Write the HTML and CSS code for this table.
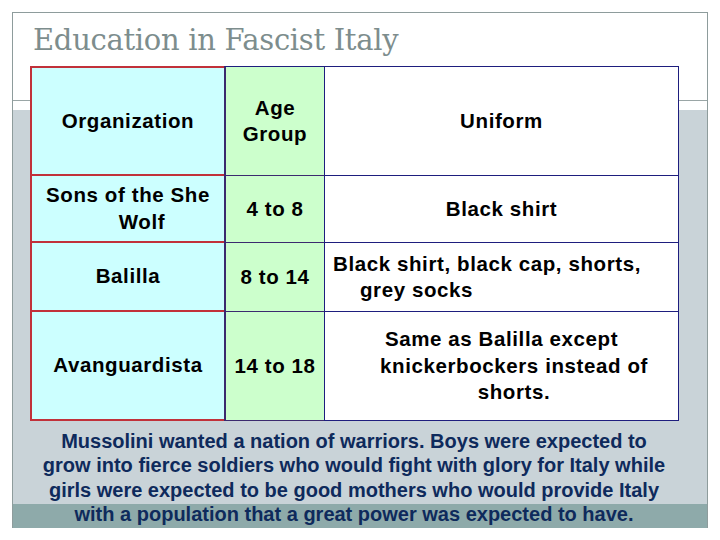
FILE: index.html
```html
<!DOCTYPE html>
<html>
<head>
<meta charset="utf-8">
<link rel="stylesheet" href="styles.css">
</head>
<body>
<div class="slide">
  <div class="bg">
    <div class="bg-head"></div>
    <div class="bg-rule"></div>
    <div class="bg-gap"></div>
    <div class="bg-body"></div>
    <div class="bg-foot"></div>
  </div>
  <div class="content">
    <h1 class="title">Education in Fascist Italy</h1>
    <div class="grid">
      <div class="c org first"><span>Organization</span></div>
      <div class="c age first"><span>Age</span><span>Group</span></div>
      <div class="c uni first"><span>Uniform</span></div>

      <div class="c org"><span>Sons of the She</span><span class="wolf">Wolf</span></div>
      <div class="c age"><span>4 to 8</span></div>
      <div class="c uni"><span>Black shirt</span></div>

      <div class="c org"><span>Balilla</span></div>
      <div class="c age"><span>8 to 14</span></div>
      <div class="c uni left"><span>Black shirt, black cap, shorts,</span><span class="ind">grey socks</span></div>

      <div class="c org"><span>Avanguardista</span></div>
      <div class="c age"><span>14 to 18</span></div>
      <div class="c uni"><span>Same as Balilla except</span><span class="shift">knickerbockers instead of</span><span class="shift">shorts.</span></div>
    </div>
    <p class="note">Mussolini wanted a nation of warriors. Boys were expected to<br>grow into fierce soldiers who would fight with glory for Italy while<br>girls were expected to be good mothers who would provide Italy<br>with a population that a great power was expected to have.</p>
  </div>
</div>
</body>
</html>
```
FILE: styles.css
```css
html, body {
  margin: 0;
  padding: 0;
  background: #ffffff;
}
.slide {
  margin: 12px 0 0 12px;
  width: 696px;
  height: 516px;
  display: grid;
  box-sizing: border-box;
  border: 1px solid #8e9c9c;
  border-bottom: none;
}
.bg, .content {
  grid-area: 1 / 1;
}
.bg {
  display: flex;
  flex-direction: column;
}
.bg-head { height: 87px; background: #ffffff; }
.bg-rule { height: 1px; background: #9aa6a6; }
.bg-gap { height: 9px; background: #ffffff; }
.bg-body { height: 394px; background: #c9d3d8; }
.bg-foot { height: 24px; background: #8eaaaa; }

.content {
  display: flex;
  flex-direction: column;
}
.title {
  margin: 0;
  padding: 10px 0 0 20px;
  height: 43px;
  font-family: "DejaVu Serif", "Liberation Serif", serif;
  font-weight: normal;
  font-size: 29px;
  line-height: 34px;
  color: #7d8d8d;
  letter-spacing: -0.3px;
}
.grid {
  margin: 0 0 0 17px;
  display: grid;
  grid-template-columns: 194px 100px 355px;
  grid-template-rows: 110px 67px 69px 109px;
  width: 649px;
  font-family: "Liberation Sans", Arial, sans-serif;
  font-weight: bold;
  font-size: 20.5px;
  letter-spacing: 0.6px;
  color: #000000;
}
.c {
  display: flex;
  flex-direction: column;
  justify-content: center;
  align-items: center;
  text-align: center;
  line-height: 26.5px;
  box-sizing: border-box;
  white-space: nowrap;
}
.org {
  background: #ccffff;
  border-left: 2px solid #c1313a;
  border-bottom: 2px solid #c1313a;
}
.org.first { border-top: 2px solid #c1313a; }
.age {
  background: #ccffcc;
  border-left: 2px solid #3b2a6e;
  border-bottom: 1px solid #3b2a6e;
}
.age.first { border-top: 1px solid #1e1e7e; }
.uni {
  background: #ffffff;
  border-left: 1px solid #1e1e7e;
  border-right: 1px solid #1e1e7e;
  border-bottom: 1px solid #1e1e7e;
}
.uni.first { border-top: 1px solid #1e1e7e; }
.wolf { padding-left: 28px; }
.uni.left {
  align-items: flex-start;
  padding-left: 8px;
}
.ind { padding-left: 27px; }
.shift { padding-left: 25px; }
.note {
  margin: 8px 0 0 0;
  padding: 0 12px 0 0;
  font-family: "Liberation Sans", Arial, sans-serif;
  font-weight: bold;
  font-size: 20px;
  line-height: 24.3px;
  text-align: center;
  white-space: nowrap;
  color: #0e2a5c;
}
```
